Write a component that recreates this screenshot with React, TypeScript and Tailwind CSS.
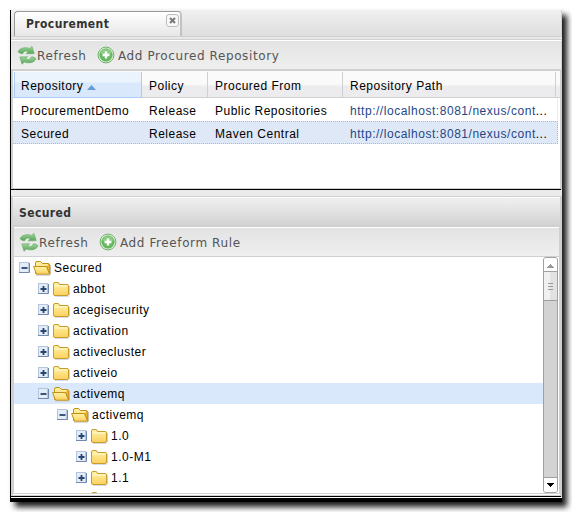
import React from "react";

const UI = "font-['Liberation_Sans',Arial,sans-serif] text-[12px] tracking-[0.5px] whitespace-nowrap";
const BAR = "font-['DejaVu_Sans',Verdana,sans-serif] text-[12px] tracking-[0.6px] text-[#555] whitespace-nowrap pt-[2px]";
const TITLE = "font-['DejaVu_Sans_Condensed','DejaVu_Sans',sans-serif] [font-stretch:condensed] text-[12px] font-bold tracking-[0.4px] text-[#333]";

function RefreshIcon() {
  return (
    <svg width="20" height="19" viewBox="0 0 20 19" className="shrink-0">
      <defs>
        <linearGradient id="rf" x1="0" y1="0" x2="0" y2="1">
          <stop offset="0" stopColor="#9fd49b" />
          <stop offset="1" stopColor="#55a556" />
        </linearGradient>
      </defs>
      <g fill="url(#rf)" stroke="#62a962" strokeWidth="0.6" strokeLinejoin="round">
        <path d="M1 5.6C2.6 2.2 7.5 .6 12.8 2.4L15 .4L17.2 7.6L9.4 7.8L11.2 5.6C8.4 4.4 6.6 5.2 5.8 7.6C3.6 7.8 1.8 7 1 5.6Z" />
        <path d="M19 12.9C17.4 16.3 12.5 17.9 7.2 16.1L5 18.2L2.8 10.9L10.6 10.7L8.8 12.9C11.6 14.1 13.4 13.3 14.2 10.9C16.4 10.7 18.2 11.5 19 12.9Z" />
      </g>
    </svg>
  );
}

function AddIcon() {
  return (
    <svg width="18" height="18" viewBox="0 0 18 18" className="shrink-0">
      <circle cx="9" cy="9" r="7.9" fill="#f4fbf2" stroke="#6ab164" strokeWidth="1" />
      <circle cx="9" cy="9" r="6.3" fill="#68b962" stroke="#57a653" strokeWidth="0.6" />
      <path d="M3.5 7.5A5.7 5.7 0 0 1 14.5 7.5Q9 9.5 3.5 7.5Z" fill="#8fce86" />
      <path d="M9 5.5V12.5M5.5 9H12.5" stroke="#fff" strokeWidth="2.4" />
    </svg>
  );
}

function Toggle({ open }: { open: boolean }) {
  return (
    <svg width="11" height="12" viewBox="0 0 11 12" className="shrink-0">
      <rect x="0.5" y="0.5" width="9" height="10" fill="#e3ecf9" stroke="#b5c5dc" />
      <path d="M0 10.5H10.5V1" fill="none" stroke="#7288aa" />
      <path d={open ? "M2.5 6H8.5" : "M2.5 6H8.5M5.5 3V9"} stroke="#26466f" strokeWidth="1.8" />
    </svg>
  );
}

function Folder({ open }: { open: boolean }) {
  return (
    <svg width="18" height="16" viewBox="0 0 18 16" className="shrink-0">
      <defs>
        <linearGradient id="fd" x1="0" y1="0" x2="0" y2="1">
          <stop offset="0" stopColor="#fff3a6" />
          <stop offset="1" stopColor="#fbd060" />
        </linearGradient>
      </defs>
      <path d="M3 15.3H16.8M17.5 5V14.5" stroke="#ccd3e2" />
      {open ? (
        <g stroke="#c39018" strokeLinejoin="round" fill="url(#fd)">
          <path d="M2.5 13.5V3Q2.5 1.5 4 1.5H7.5L9.5 3.5H15Q16.5 3.5 16.5 5V13.5Z" />
          <path d="M.6 6.5H13.5L16.8 14.2H3.5Z" />
          <path d="M13.7 6.5L16.8 14V5.5L15.6 4" fill="#edb734" />
        </g>
      ) : (
        <g stroke="#c99b28" strokeLinejoin="round">
          <path d="M1.5 4V3Q1.5 1.5 3 1.5H6Q7 1.5 7.5 3.5H15Q16.5 3.5 16.5 5V13Q16.5 14.5 15 14.5H3Q1.5 14.5 1.5 13Z" fill="url(#fd)" />
          <path d="M2.5 5H15.5" stroke="#fffbd8" />
        </g>
      )}
    </svg>
  );
}

const nodes = [
  { name: "Secured", pad: "pl-[5px]", open: true, sel: false },
  { name: "abbot", pad: "pl-[24px]", open: false, sel: false },
  { name: "acegisecurity", pad: "pl-[24px]", open: false, sel: false },
  { name: "activation", pad: "pl-[24px]", open: false, sel: false },
  { name: "activecluster", pad: "pl-[24px]", open: false, sel: false },
  { name: "activeio", pad: "pl-[24px]", open: false, sel: false },
  { name: "activemq", pad: "pl-[24px]", open: true, sel: true },
  { name: "activemq", pad: "pl-[43px]", open: true, sel: false },
  { name: "1.0", pad: "pl-[62px]", open: false, sel: false },
  { name: "1.0-M1", pad: "pl-[62px]", open: false, sel: false },
  { name: "1.1", pad: "pl-[62px]", open: false, sel: false },
  { name: "", pad: "pl-[62px]", open: false, sel: false },
];

function GridRow({ name, from, selected }: { name: string; from: string; selected?: boolean }) {
  return (
    <div
      className={`${UI} grid h-[23px] w-[545px] grid-cols-[128px_66px_135px_1fr] items-center border-y border-r pt-[3px] leading-[18px] ${
        selected ? "border-dotted border-[#a3bae9] bg-[#dfe8f6]" : "border-y-white border-r-[#ededed]"
      }`}
    >
      <span className="pl-2">{name}</span>
      <span className="pl-2">Release</span>
      <span className="pl-2">{from}</span>
      <span className="pl-2 tracking-[0.53px] text-[#1f4788]">http://localhost:8081/nexus/cont<span className="text-black">...</span></span>
    </div>
  );
}

export default function App() {
  return (
    <div className="h-[512px] w-[572px] overflow-hidden bg-white pl-[10px] pt-[10px] text-black">
      <div className="h-[492px] w-[552px] border-b-4 border-l border-black bg-[#d0d0d0] shadow-[5px_5px_6px_0px_rgba(0,0,0,0.9)]">
        <div className="flex h-[26px] items-end justify-start border-r border-[#d0d0d0] bg-linear-to-b from-[#f0f0f0] to-[#dedede] pl-[3px]">
          <div className="flex h-[25px] w-[168px] items-start justify-between rounded-t-[4px] border border-b-0 border-[#999] border-r-2 border-r-[#c2c2c2] bg-linear-to-b from-white to-[#e7e7e7]">
            <span className={`${TITLE} pl-[11px] pt-[3px] leading-[18px]`}>Procurement</span>
            <svg width="13" height="13" viewBox="0 0 13 13" className="mr-[1px] mt-[2px]">
              <rect x=".5" y=".5" width="12" height="12" rx="2.5" fill="#f8f8f8" stroke="#bbb" />
              <path d="M4 4L9 9M9 4L4 9" stroke="#777" strokeWidth="2" />
            </svg>
          </div>
        </div>
        <div className="mt-px h-[2px] bg-[#e8e8e8]" />
        <div className="mt-px flex h-[29px] items-center border-r border-t border-r-[#d0d0d0] border-t-white bg-linear-to-b from-[#e3e3e3] to-[#efefef] pl-[6px]">
          <RefreshIcon />
          <span className={`${BAR} w-[60px]`}>Refresh</span>
          <AddIcon />
          <span className={`${BAR} ml-[3px]`}>Add Procured Repository</span>
        </div>
        <div className="ml-[2px] mr-[2px] mt-[2px] h-[117px] bg-white">
          <div className={`${UI} flex h-[27px] border-b border-[#d0d0d0] bg-linear-to-b from-[#fafafa] from-50% to-[#ececee] to-60%`}>
            <div className="ml-px mt-px flex h-[26px] w-[128px] items-center border border-t-0 border-[#aaccf6] bg-linear-to-b from-[#ebf3fd] from-40% to-[#d9e8fb] to-45% pl-[6px] pt-[2px]">
              Repository
              <svg width="9" height="5" viewBox="0 0 9 5" className="ml-[4px] mt-[3px]"><path d="M4.5 0L9 5H0Z" fill="#659bd8" /></svg>
            </div>
            <div className="mt-px flex w-[66px] items-center border-r border-[#d0d0d0] pl-[7px] pt-[2px]">Policy</div>
            <div className="mt-px flex w-[135px] items-center border-r border-[#d0d0d0] pl-[7px] pt-[2px]">Procured From</div>
            <div className="mt-px flex w-[213px] items-center border-r border-[#d0d0d0] pl-[7px] pt-[2px]">Repository Path</div>
          </div>
          <GridRow name="ProcurementDemo" from="Public Repositories" />
          <GridRow name="Secured" from="Maven Central" selected />
        </div>
        <div className="mt-px mr-px h-px bg-black" />
        <div className="h-[6px] bg-[#ebebeb]" />
        <div className="ml-[2px] mr-[2px] mt-px flex h-[29px] items-center border-b border-t border-b-[#d0d0d0] border-t-white bg-linear-to-b from-[#f0f0f0] to-[#d3d3d3] pl-[6px] pt-[2px]">
          <span className={TITLE}>Secured</span>
        </div>
        <div className="ml-[3px] mr-[3px] mt-px flex h-[30px] items-center border-b border-t border-b-[#d0d0d0] border-t-white bg-linear-to-b from-[#e3e3e3] to-[#efefef] pl-[5px]">
          <RefreshIcon />
          <span className={`${BAR} w-[60px]`}>Refresh</span>
          <AddIcon />
          <span className={`${BAR} ml-[3px]`}>Add Freeform Rule</span>
        </div>
        <div className="ml-[3px] mr-[2px] flex h-[236px] bg-white">
          <div className="w-[529px] overflow-hidden">
            {nodes.map((n, i) => (
              <div key={i} className={`flex h-[21px] items-center ${n.pad} ${n.sel ? "bg-[#d9e8fb]" : ""}`}>
                <Toggle open={n.open} />
                <span className="ml-[3px] mr-[3px] flex"><Folder open={n.open} /></span>
                <span className={UI}>{n.name}</span>
              </div>
            ))}
          </div>
          <div className="flex h-[236px] w-[15px] flex-col overflow-hidden rounded-[3px] border border-[#a0a0a0] bg-[#d3d3d3]">
            <div className="flex h-[14px] shrink-0 items-center justify-center border-b border-[#a0a0a0] bg-white pt-[2px]">
              <svg width="7" height="4" viewBox="0 0 7 4" shapeRendering="crispEdges"><path d="M3.5 0L7 4H0Z" fill="#999" /></svg>
            </div>
            <div className="flex h-[29px] shrink-0 flex-col items-center justify-center gap-[2px] border-b border-[#a0a0a0] bg-linear-to-r from-[#f0f0f0] from-50% to-[#e2e2e2] to-50%">
              <div className="h-px w-[5px] bg-[#999]" />
              <div className="h-px w-[5px] bg-[#999]" />
              <div className="h-px w-[5px] bg-[#999]" />
            </div>
            <div className="mt-auto flex h-[15px] shrink-0 items-center justify-center border-t border-[#a0a0a0] bg-white">
              <svg width="7" height="4" viewBox="0 0 7 4" shapeRendering="crispEdges"><path d="M0 0H7L3.5 4Z" fill="#000" /></svg>
            </div>
          </div>
          <div className="ml-px w-px bg-[#d0d0d0]" />
        </div>
        <div className="ml-[2px] mt-px mr-[2px] h-px bg-white" />
        <div className="mt-px mr-px h-px bg-black" />
        <div className="h-px bg-white" />
      </div>
    </div>
  );
}
